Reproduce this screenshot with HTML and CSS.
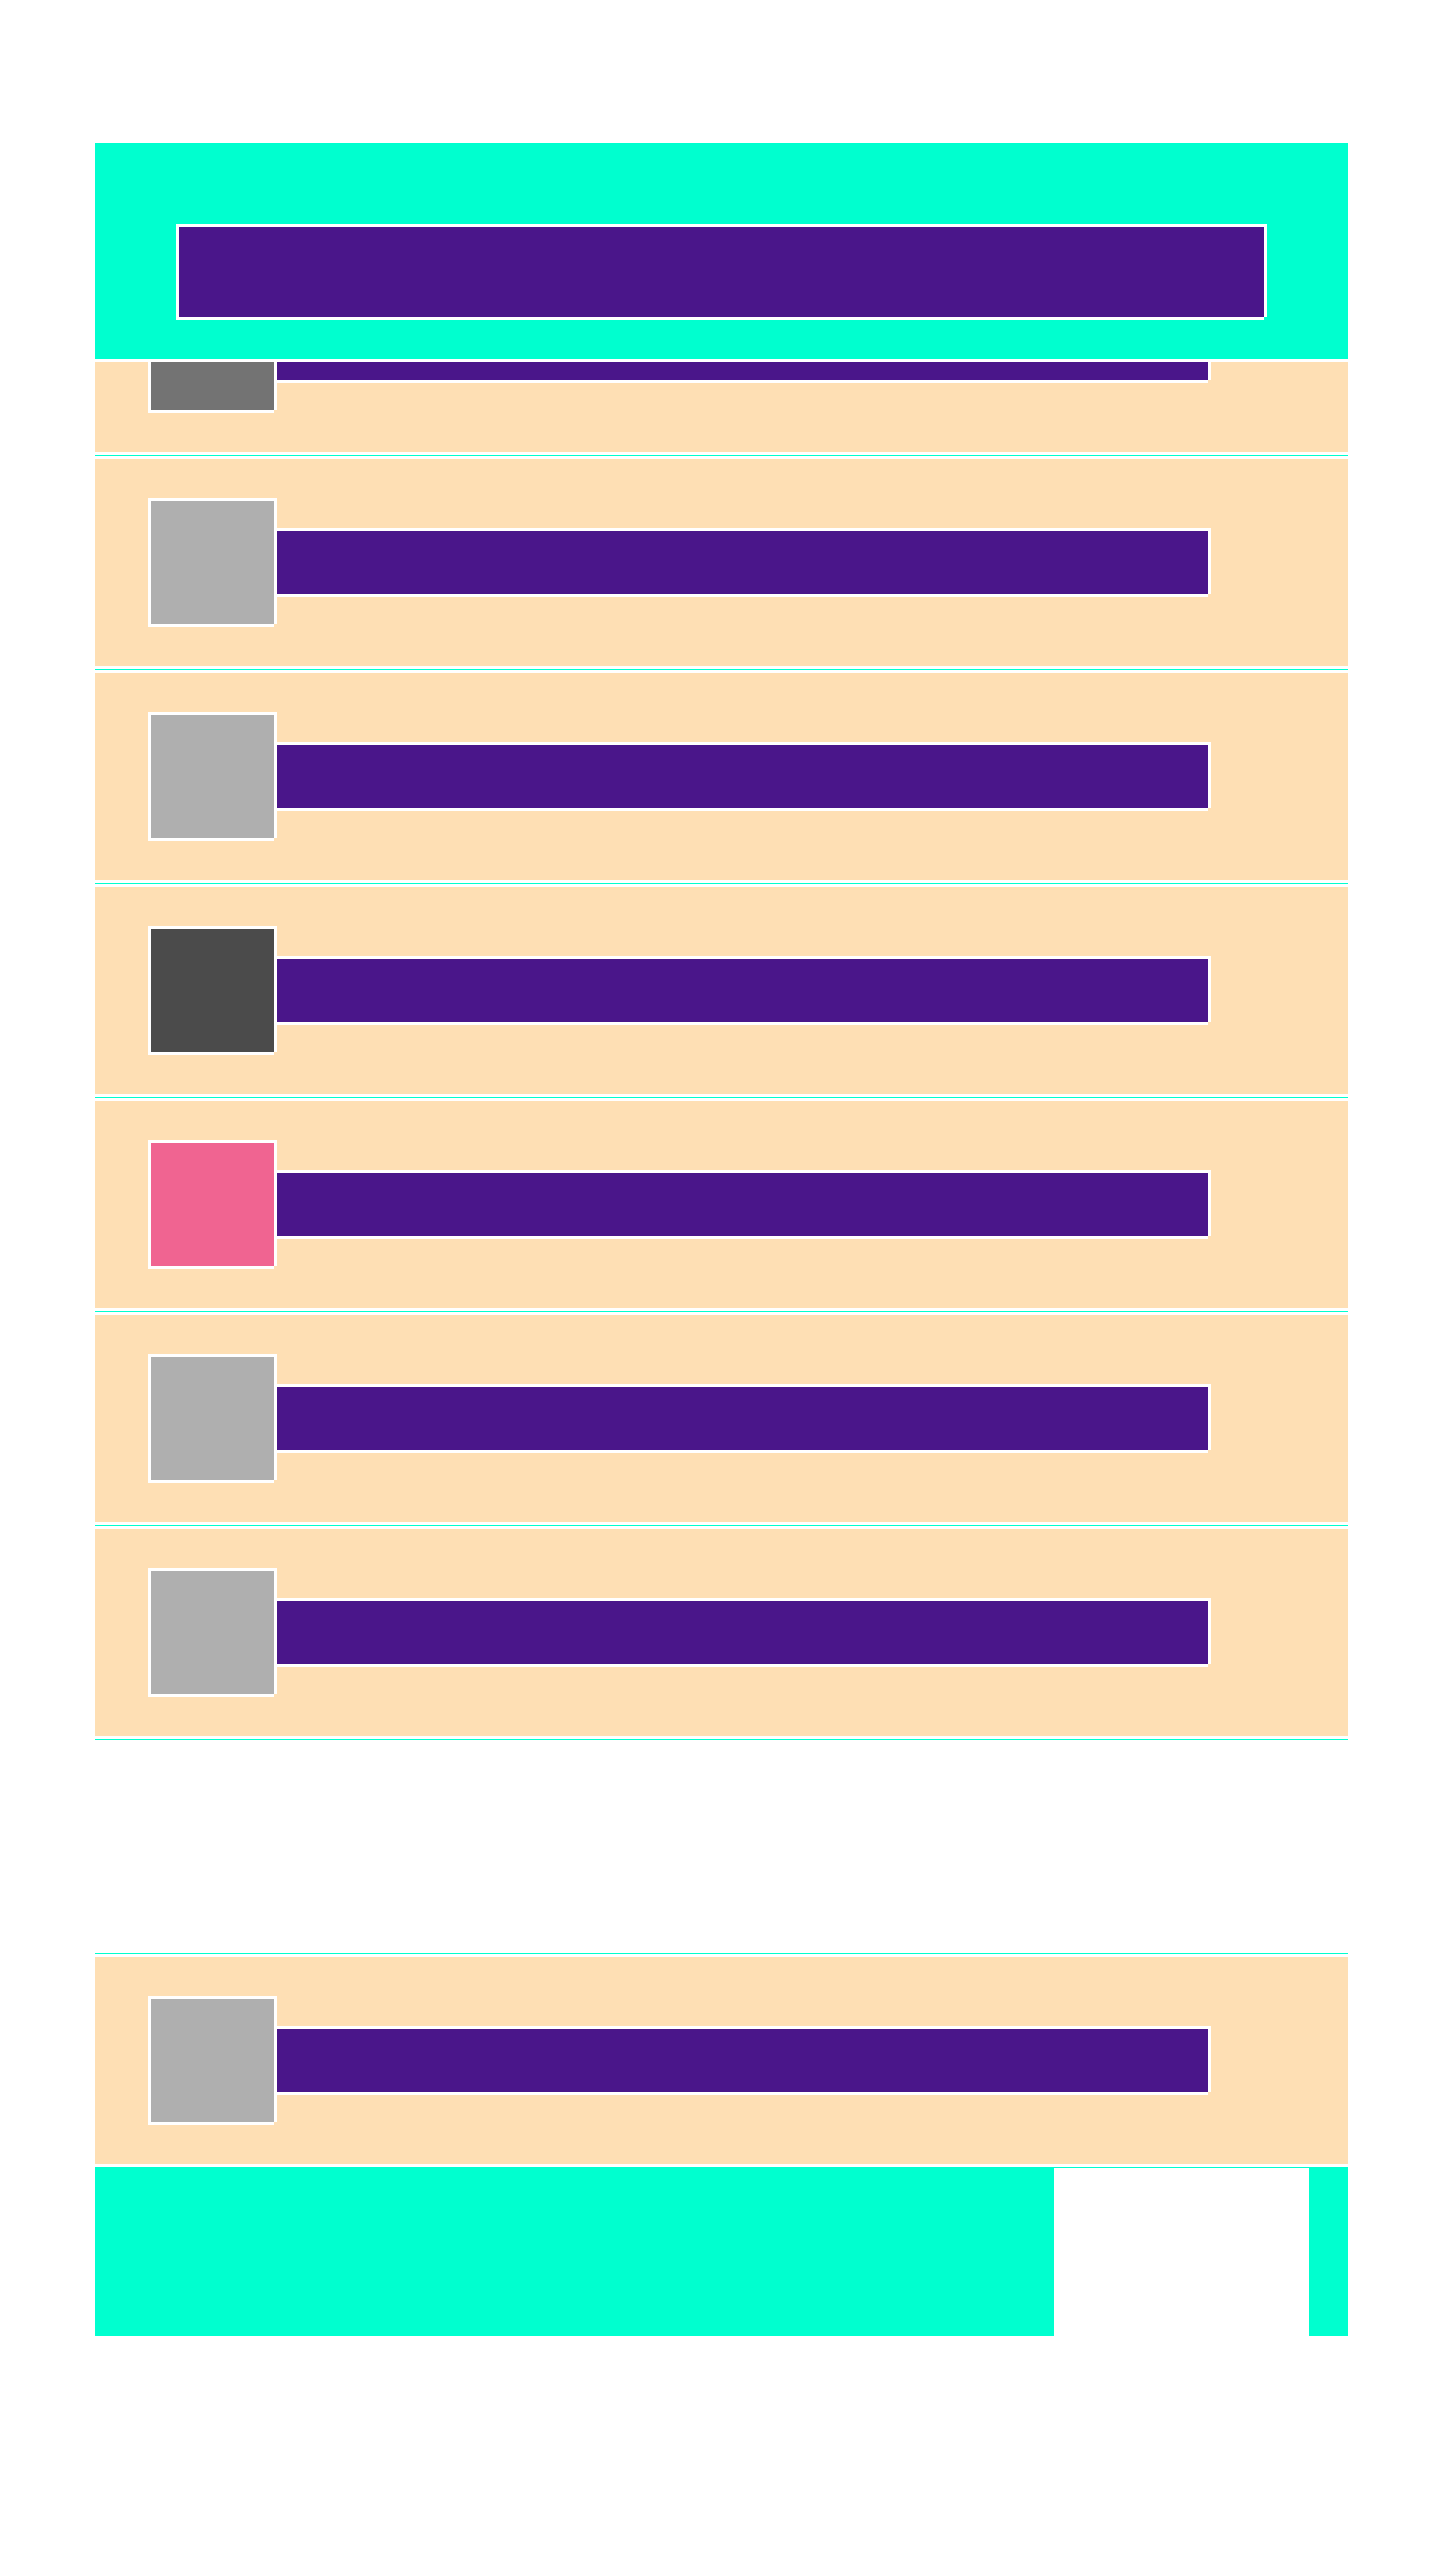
FILE: index.html
```html
<!DOCTYPE html>
<html lang="en">
<head>
  <meta charset="UTF-8" />
  <meta name="viewport" content="width=device-width, initial-scale=1.0"/>
  <title>Playlist</title>
  <link rel="stylesheet" href="styles.css">
</head>
<body>

  <div class="app">
    <header class="top">
      <div class="title"></div>
    </header>

    <ul class="list">
      <li class="row"><div class="card"><div class="thumb thumb-mid"></div><div class="bar"></div></div></li>
      <li class="row"><div class="card"><div class="thumb"></div><div class="bar"></div></div></li>
      <li class="row"><div class="card"><div class="thumb"></div><div class="bar"></div></div></li>
      <li class="row"><div class="card"><div class="thumb thumb-dark"></div><div class="bar"></div></div></li>
      <li class="row"><div class="card"><div class="thumb thumb-pink"></div><div class="bar"></div></div></li>
      <li class="row"><div class="card"><div class="thumb"></div><div class="bar"></div></div></li>
      <li class="row"><div class="card"><div class="thumb"></div><div class="bar"></div></div></li>
      <!-- drop placeholder -->
      <li class="row"><div class="card placeholder"></div></li>
      <li class="row"><div class="card"><div class="thumb"></div><div class="bar"></div></div></li>
    </ul>

    <footer class="bottom">
      <div class="slot"></div>
    </footer>
  </div>

</body>
</html>
```

FILE: styles.css
```css
body {
  margin: 0;
  background: #ffffff;
  font-family: 'Liberation Sans', sans-serif;
}

.app {
  width: 1253px;
  margin: 143px 0 0 95px;
}

.top {
  position: relative;
  z-index: 1;
  background: #00ffcf;
  padding: 81px 84px 42px 81px;
  border-bottom: 3px solid #ffffff;
}

.title {
  height: 90px;
  background: #4a168a;
  border-top: 3px solid #ffffff;
  border-left: 3px solid #ffffff;
  box-shadow: 3px 0 0 #ffffff, 0 3px 0 #ffffff;
}

.list {
  list-style: none;
  margin: -120px 0 0;
  padding: 0;
}

.row {
  padding: 3px 0;
  border-bottom: 1px solid #00ffcf;
}

.card {
  height: 207px;
  box-sizing: border-box;
  background: #fedfb4;
  display: flex;
  align-items: flex-start;
  padding: 39px 140px 0 53px;
}

.card.placeholder {
  background: none;
}

.thumb {
  width: 123px;
  height: 123px;
  flex: none;
  background: #afafaf;
  border-top: 3px solid #ffffff;
  border-left: 3px solid #ffffff;
  box-shadow: 3px 0 0 #ffffff, 0 3px 0 #ffffff;
}

.thumb-mid { background: #737373; }
.thumb-dark { background: #4b4b4b; }
.thumb-pink { background: #f06491; }

.bar {
  flex: 1;
  height: 63px;
  margin-top: 30px;
  background: #4a168a;
  border-top: 3px solid #ffffff;
  border-left: 3px solid #ffffff;
  box-shadow: 3px 0 0 #ffffff, 0 3px 0 #ffffff;
}

.bottom {
  height: 168px;
  background: #00ffcf;
  display: flex;
  justify-content: flex-end;
  padding-right: 39px;
}

.slot {
  width: 255px;
  background: #ffffff;
}
```
